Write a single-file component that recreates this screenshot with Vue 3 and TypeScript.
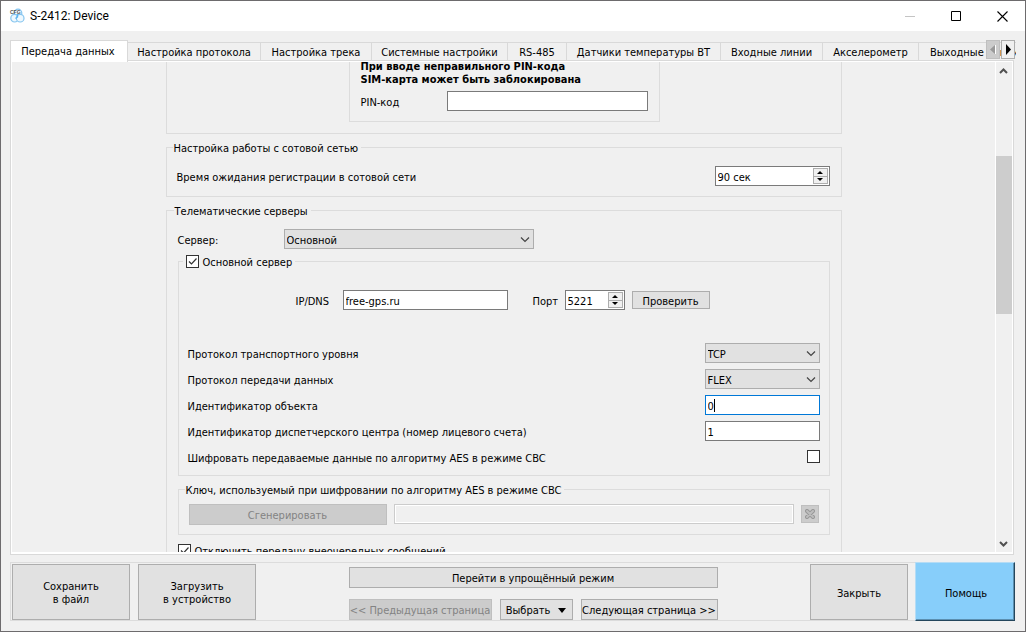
<script setup lang="ts">
import { ref } from 'vue'

const tabs: string[] = [
  'Передача данных',
  'Настройка протокола',
  'Настройка трека',
  'Системные настройки',
  'RS-485',
  'Датчики температуры BT',
  'Входные линии',
  'Акселерометр',
  'Выходные линии',
]
const activeTab = ref(0)

const pin = ref('')
const timeout = ref(90)
const server = ref('Основной')
const mainEnabled = ref(true)
const host = ref('free-gps.ru')
const port = ref(5221)
const transport = ref('TCP')
const protocol = ref('FLEX')
const objectId = ref('0')
const centerId = ref('1')
const aes = ref(false)
const aesKey = ref('')
const noExtra = ref(true)
</script>

<template>
  <div class="window">
    <header class="titlebar">
      <svg class="app-icon" width="16" height="16" viewBox="0 0 16 16" aria-hidden="true">
        <g fill="#eef8fe" stroke="#86c5ef" stroke-width="1.2">
          <circle cx="9" cy="5" r="3.8" />
          <circle cx="5.6" cy="10.200" r="3.8" />
          <circle cx="11.200" cy="10.200" r="3.8" />
        </g>
        <path d="M8.500 6v3l-2 1.500" fill="none" stroke="#5cb4f0" stroke-width="1.4" />
        <text x="1" y="6" class="icon-text">CFG</text>
      </svg>
      <h1>S-2412: Device</h1>
      <div class="win-buttons">
        <button type="button" aria-label="Свернуть">
          <svg width="11" height="11"><path d="M0 5.5h10" stroke="#c4c4c4" /></svg>
        </button>
        <button type="button" aria-label="Развернуть">
          <svg width="11" height="11"><path d="M.5 .5h9v9h-9z" fill="none" stroke="#000" /></svg>
        </button>
        <button type="button" aria-label="Закрыть окно">
          <svg width="11" height="11"><path d="M.5 .5l10 10M10.5 .5l-10 10" stroke="#000" stroke-width="1.1" /></svg>
        </button>
      </div>
    </header>

    <nav class="tabs" role="tablist">
      <button
        v-for="(tab, i) in tabs"
        :key="tab"
        type="button"
        role="tab"
        class="tab"
        :class="{ active: i === activeTab }"
        :aria-selected="i === activeTab"
        @click="activeTab = i"
      >{{ tab }}</button>
      <div class="tab-scroll">
        <button type="button" disabled aria-label="Назад">
          <svg width="12" height="17"><path d="M8 4v9L3 8.5z" fill="#999" /><path d="M8.500 4v9" stroke="#fff" /></svg>
        </button>
        <button type="button" aria-label="Вперёд">
          <svg width="12" height="17"><path d="M4 3v11l5-5.500z" fill="#000" /></svg>
        </button>
      </div>
    </nav>

    <main class="panel">
      <div class="viewport">
        <div class="page">
          <section class="group sim">
            <div class="group sim-inner">
              <p>При вводе неправильного PIN-кода<br />SIM-карта может быть заблокирована</p>
              <div class="row pin-row">
                <label for="pin">PIN-код</label>
                <input id="pin" v-model="pin" type="text" class="field" />
              </div>
            </div>
          </section>

          <fieldset class="group">
            <legend>Настройка работы с сотовой сетью</legend>
            <div class="row between">
              <label for="timeout">Время ожидания регистрации в сотовой сети</label>
              <span class="spin wide">
                <input id="timeout" type="text" :value="timeout + ' сек'" />
                <span class="steps">
                  <button type="button" aria-label="Больше" @click="timeout++"><svg width="6" height="3"><path d="M0 3h6L3 0z" /></svg></button>
                  <button type="button" aria-label="Меньше" @click="timeout--"><svg width="6" height="3"><path d="M0 0h6L3 3z" /></svg></button>
                </span>
              </span>
            </div>
          </fieldset>

          <fieldset class="group servers">
            <legend>Телематические серверы</legend>
            <div class="row">
              <label for="server" class="server-label">Сервер:</label>
              <span class="combo server-combo">
                <select id="server" v-model="server"><option>Основной</option></select>
                <svg width="10" height="6"><path d="M1 .5L5 4.500 9 .5" /></svg>
              </span>
            </div>

            <fieldset class="group main-server">
              <legend class="check-legend">
                <label class="check">
                  <input v-model="mainEnabled" type="checkbox" />
                  <svg width="13" height="13"><path d="M3 6.500l2.500 2.500 5-5.500" /></svg>
                  Основной сервер
                </label>
              </legend>
              <div class="row address">
                <label for="host" class="host-label">IP/DNS</label>
                <input id="host" v-model="host" type="text" class="field host" />
                <label for="port" class="port-label">Порт</label>
                <span class="spin port">
                  <input id="port" v-model="port" type="text" />
                  <span class="steps">
                    <button type="button" aria-label="Больше" @click="port++"><svg width="6" height="3"><path d="M0 3h6L3 0z" /></svg></button>
                    <button type="button" aria-label="Меньше" @click="port--"><svg width="6" height="3"><path d="M0 0h6L3 3z" /></svg></button>
                  </span>
                </span>
                <button type="button" class="btn verify">Проверить</button>
              </div>
              <div class="form">
                <div class="row between">
                  <label for="transport">Протокол транспортного уровня</label>
                  <span class="combo wide">
                    <select id="transport" v-model="transport"><option>TCP</option><option>UDP</option></select>
                    <svg width="10" height="6"><path d="M1 .5L5 4.500 9 .5" /></svg>
                  </span>
                </div>
                <div class="row between">
                  <label for="protocol">Протокол передачи данных</label>
                  <span class="combo wide">
                    <select id="protocol" v-model="protocol"><option>FLEX</option></select>
                    <svg width="10" height="6"><path d="M1 .5L5 4.500 9 .5" /></svg>
                  </span>
                </div>
                <div class="row between">
                  <label for="object">Идентификатор объекта</label>
                  <span class="focus-wrap wide">
                    <input id="object" v-model="objectId" type="text" class="field current" />
                    <span class="caret"></span>
                  </span>
                </div>
                <div class="row between">
                  <label for="center">Идентификатор диспетчерского центра (номер лицевого счета)</label>
                  <input id="center" v-model="centerId" type="text" class="field wide" />
                </div>
                <div class="row between">
                  <label for="aes">Шифровать передаваемые данные по алгоритму AES в режиме CBC</label>
                  <span class="check aes">
                    <input id="aes" v-model="aes" type="checkbox" />
                    <svg width="13" height="13"><path d="M3 6.500l2.500 2.500 5-5.500" /></svg>
                  </span>
                </div>
              </div>
            </fieldset>

            <fieldset class="group key">
              <legend>Ключ, используемый при шифровании по алгоритму AES в режиме CBC</legend>
              <div class="row key-row">
                <button type="button" class="btn generate" disabled>Сгенерировать</button>
                <input v-model="aesKey" type="text" class="field key-field" aria-label="Ключ" disabled />
                <button type="button" class="btn clear" aria-label="Очистить" disabled>
                  <svg width="10" height="10" viewBox="0 0 10 10">
                    <path d="M2 2l6 6M8 2l-6 6" stroke="#979797" stroke-width="4" stroke-linecap="round" />
                    <path d="M2 2l6 6M8 2l-6 6" stroke="#bdbdbd" stroke-width="2" stroke-linecap="round" />
                  </svg>
                </button>
              </div>
            </fieldset>

            <label class="check extra">
              <input v-model="noExtra" type="checkbox" />
              <svg width="13" height="13"><path d="M3 6.500l2.500 2.500 5-5.500" /></svg>
              Отключить передачу внеочередных сообщений
            </label>
          </fieldset>
        </div>
      </div>
      <div class="scrollbar">
        <button type="button" aria-label="Вверх"><svg width="9" height="6"><path d="M1 5l3.500-3.500L8 5" /></svg></button>
        <div class="track"><div class="thumb"></div></div>
        <button type="button" aria-label="Вниз"><svg width="9" height="6"><path d="M1 1l3.500 3.500L8 1" /></svg></button>
      </div>
    </main>

    <footer class="footer">
      <div class="side">
        <button type="button" class="btn big">Сохранить<br />в файл</button>
        <button type="button" class="btn big">Загрузить<br />в устройство</button>
      </div>
      <div class="middle">
        <button type="button" class="btn">Перейти в упрощённый режим</button>
        <div class="pager">
          <button type="button" class="btn" disabled>&lt;&lt; Предыдущая страница</button>
          <button type="button" class="btn choose">
            Выбрать
            <svg width="8" height="5"><path d="M0 0h8L4 5z" /></svg>
          </button>
          <button type="button" class="btn">Следующая страница &gt;&gt;</button>
        </div>
      </div>
      <div class="side right">
        <button type="button" class="btn close">Закрыть</button>
        <button type="button" class="help">Помощь</button>
      </div>
    </footer>
  </div>
</template>

<style>
body {
  background: #f0f0f0;
}
</style>

<style scoped>
.window,
.window * {
  box-sizing: border-box;
}
.window {
  display: flex;
  flex-direction: column;
  height: 100vh;
  overflow: hidden;
  border: 1px solid #6d6b6d;
  background: #f0f0f0;
  color: #000;
  font-family: 'DejaVu Sans Condensed', 'Noto Sans', sans-serif;
  font-size: 11px;
  line-height: 13px;
}
button,
input,
select {
  margin: 0;
  padding: 0;
  border: 0;
  border-radius: 0;
  outline: 0;
  background: none;
  color: inherit;
  font: inherit;
}
svg {
  display: block;
  flex: none;
}

.titlebar {
  display: flex;
  flex: none;
  align-items: center;
  height: 30px;
  padding-left: 8px;
  background: #fff;
}
.icon-text {
  font: bold 5px 'Liberation Sans', sans-serif;
  fill: #555;
}
h1 {
  flex: 1;
  margin: 0 0 0 5px;
  font-family: Roboto, 'Open Sans', sans-serif;
  font-size: 12px;
  font-weight: 400;
  line-height: 16px;
}
.win-buttons {
  display: flex;
}
.win-buttons button {
  display: flex;
  align-items: center;
  justify-content: center;
  width: 46px;
  height: 30px;
}

.tabs {
  position: relative;
  display: grid;
  flex: none;
  grid-template-columns: 118px 133px 111px 136px 59px 154px 102px 96px 1fr;
  align-items: end;
  height: 20px;
  margin: 9px 9px 0;
}
.tab {
  height: 18px;
  padding-top: 2px;
  border-top: 1px solid #d9d9d9;
  border-right: 1px solid #d9d9d9;
  white-space: nowrap;
  overflow: hidden;
}
.tab.active {
  position: relative;
  height: 22px;
  margin-bottom: -2px;
  padding: 0 2px 0 0;
  border-left: 1px solid #d9d9d9;
  background: #fff;
}
.tab:nth-child(9) {
  padding-left: 11px;
  border-right: 0;
  text-align: left;
}
.tab-scroll {
  position: absolute;
  top: 0;
  right: 1px;
  display: flex;
  gap: 1px;
}
.tab-scroll button {
  width: 14px;
  height: 19px;
  border: 1px solid #adadad;
  background: #f0f0f0;
}
.tab-scroll button:disabled {
  border-color: #bfbfbf;
  background: #ccc;
}

.panel {
  display: flex;
  flex: 1;
  min-height: 0;
  margin: 0 11px 0 9px;
  padding: 1px 1px 2px;
  border: 1px solid #d9d9d9;
  background: #fff;
}
.viewport {
  flex: 1;
  min-width: 0;
  overflow: hidden;
  background: #f0f0f0;
}
.page {
  max-width: 676px;
  margin: -2px auto 0;
}
.group {
  min-width: 0;
  margin: 7px 0 0;
  padding: 12px 11px 10px 10px;
  border: 1px solid #dcdcdc;
}
legend {
  height: 13px;
  margin-left: -4px;
  padding: 0 3px 0 1px;
  line-height: 15px;
}
.sim {
  margin: 0;
  padding: 0 181px 11px 182px;
  border-top: 0;
}
.sim-inner {
  margin: 0;
  padding: 0 11px 10px;
  border-top: 0;
}
.sim-inner p {
  margin: 0;
  font-weight: 700;
  white-space: nowrap;
}
.row {
  display: flex;
  align-items: center;
  min-height: 20px;
  white-space: nowrap;
}
.row label {
  padding-top: 2px;
}
.between {
  justify-content: space-between;
}
.pin-row {
  justify-content: space-between;
  margin-top: 5px;
}
.pin-row .field {
  width: 201px;
}
.field {
  height: 20px;
  padding: 2px 2px 0;
  border: 1px solid #7a7a7a;
  background: #fff;
}
.wide {
  width: 115px;
}

.spin {
  display: flex;
  height: 20px;
  padding: 1px;
  border: 1px solid #7a7a7a;
  background: #fff;
}
.spin input {
  flex: 1;
  width: 0;
  padding: 2px 0 0 1px;
}
.steps {
  display: flex;
  flex-direction: column;
  width: 15px;
}
.steps button {
  display: flex;
  flex: 1;
  align-items: center;
  justify-content: center;
  min-height: 0;
  border: 1px solid #adadad;
  background: #f0f0f0;
}
.steps button + button {
  margin-top: -1px;
}

.combo {
  position: relative;
  display: block;
}
.combo select {
  display: block;
  width: 100%;
  height: 20px;
  padding: 2px 20px 0 2px;
  border: 1px solid #adadad;
  background: #e1e1e1;
  appearance: none;
}
.combo svg {
  position: absolute;
  top: 8px;
  right: 4px;
  fill: none;
  stroke: #444;
  stroke-width: 1.2;
  pointer-events: none;
}
.server-label {
  width: 106px;
}
.server-combo {
  width: 250px;
}
.servers {
  padding-left: 11px;
}
.main-server {
  margin-top: 6px;
  padding: 22px 9px 8px;
}
.check-legend {
  margin-left: -5px;
  padding: 0 3px;
}
.check {
  position: relative;
  display: flex;
  gap: 4px;
  align-items: flex-start;
  line-height: 15px;
  white-space: nowrap;
}
.check input {
  flex: none;
  width: 13px;
  height: 13px;
  border: 1px solid #333;
  background: #fff;
  appearance: none;
}
.check svg {
  position: absolute;
  top: 0;
  left: 0;
  visibility: hidden;
  fill: none;
  stroke: #333;
  stroke-width: 1.2;
  pointer-events: none;
}
.check input:checked + svg {
  visibility: visible;
}
.aes {
  align-self: flex-start;
  margin-top: 3px;
}
.address {
  padding-left: 108px;
}
.host-label {
  width: 47px;
}
.host {
  width: 165px;
}
.port-label {
  width: 32px;
  margin-left: 25px;
}
.port {
  width: 60px;
}
.verify {
  width: 78px;
  margin-left: 7px;
}
.form {
  display: grid;
  gap: 6px;
  margin-top: 33px;
}
.focus-wrap {
  position: relative;
}
.current {
  display: block;
  width: 100%;
  border-color: #0078d7;
  caret-color: transparent;
}
.caret {
  position: absolute;
  top: 4px;
  left: 9px;
  width: 1px;
  height: 13px;
  background: #000;
}
.key {
  padding: 8px 10px 9px;
}
.key-row {
  gap: 7px;
  align-items: flex-start;
}
.generate {
  width: 198px;
}
.key-field {
  flex: 1;
  min-width: 0;
}
.key-field:disabled {
  border-color: #ccc;
  background: #f0f0f0;
  box-shadow: inset 0 0 0 1px #fff;
}
.clear {
  display: flex;
  align-items: center;
  justify-content: center;
  width: 18px;
  margin-top: 1px;
}
.extra {
  margin-top: 9px;
}

.scrollbar {
  display: flex;
  flex: none;
  flex-direction: column;
  width: 17px;
  border-left: 1px solid #fff;
  background: #f0f0f0;
}
.scrollbar button {
  display: flex;
  align-items: center;
  justify-content: center;
  height: 17px;
  padding-right: 1px;
}
.scrollbar path {
  fill: none;
  stroke: #505050;
  stroke-width: 2;
}
.track {
  display: grid;
  flex: 1;
  grid-template-rows: 77fr 158fr 221fr;
}
.thumb {
  grid-row: 2;
  background: #cdcdcd;
}

.btn {
  height: 21px;
  padding-top: 1px;
  border: 1px solid #adadad;
  background: #e1e1e1;
  white-space: nowrap;
}
.btn:disabled {
  border-color: #bfbfbf;
  background: #ccc;
  color: #838383;
}
.btn.verify,
.btn.clear {
  height: 18px;
}
.btn.verify {
  padding-top: 2px;
}
.btn.clear {
  padding: 0;
}
.footer {
  display: flex;
  flex: none;
  justify-content: space-between;
  margin: 7px 10px 10px 9px;
  padding: 1px 0 0 1px;
  border: 1px solid #dcdcdc;
}
.side {
  display: flex;
  gap: 8px;
}
.btn.big {
  width: 118px;
  height: 56px;
  padding-top: 2px;
}
.middle {
  display: flex;
  flex-direction: column;
  justify-content: space-between;
  width: 369px;
  padding-top: 3px;
}
.pager {
  display: grid;
  grid-template-columns: 143fr 73fr 137fr;
  gap: 8px;
}
.choose {
  display: flex;
  gap: 8px;
  align-items: center;
  justify-content: center;
}
.right {
  gap: 7px;
}
.btn.close {
  width: 98px;
  height: 56px;
  padding-top: 2px;
}
.help {
  width: 100px;
  margin: -2px -1px -1px 0;
  padding: 4px 0 0 2px;
  border: 1px solid #b5dcf5;
  border-right: 1px solid #24465c;
  border-bottom: 1px solid #24465c;
  background: #87cefa;
  box-shadow: inset -1px -1px 0 #5b8fb0;
}
</style>
